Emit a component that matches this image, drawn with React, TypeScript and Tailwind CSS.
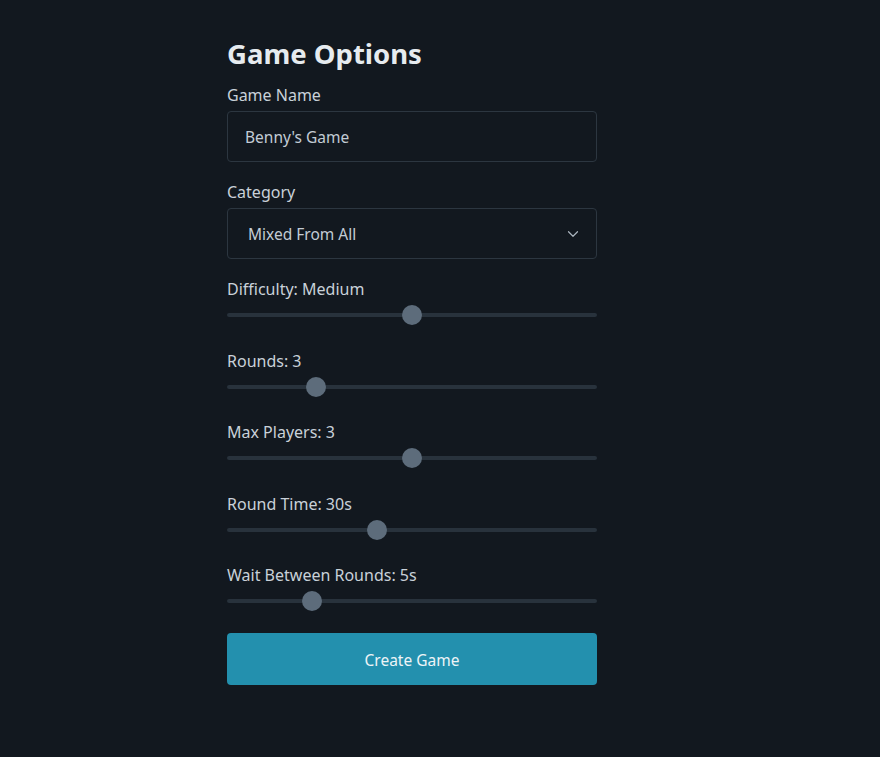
import { ChevronDown } from "lucide-react";

const sliders = [
  { label: "Difficulty: Medium", pos: 0.5 },
  { label: "Rounds: 3", pos: 0.24 },
  { label: "Max Players: 3", pos: 0.5 },
  { label: "Round Time: 30s", pos: 0.405 },
  { label: "Wait Between Rounds: 5s", pos: 0.23 },
];

function Slider({ pos }: { pos: number }) {
  return (
    <div className="relative h-5 w-full flex items-center">
      <div className="h-1 w-full rounded-full bg-[#28323c]" />
      <div
        className="absolute top-0 w-5 h-5 rounded-full bg-[#5d6c7b]"
        style={{ left: `calc(${pos * 100}% - 10px)` }}
      />
    </div>
  );
}

export default function App() {
  return (
    <div
      className="min-h-screen w-full bg-[#12181f] text-[#c9d1d9] pl-[227px]"
      style={{ fontFamily: '"Noto Sans", "Open Sans", sans-serif' }}
    >
      <div className="w-[370px] pt-[35px]">
        <h1 className="text-[27.5px] leading-[38px] font-bold text-[#e6ebef] mb-[10px]">
          Game Options
        </h1>

        <label className="block text-[16px] leading-6 mb-1">Game Name</label>
        <div className="h-[51px] w-full rounded-[4px] border border-[#2c3640] flex items-center pl-[17px] pt-[2px] text-[15.5px] text-[#c3ccd5]">
          Benny's Game
        </div>

        <label className="block text-[16px] leading-6 mt-[18px] mb-1">Category</label>
        <div className="h-[51px] w-full rounded-[4px] border border-[#2c3640] flex items-center justify-between pl-[20px] pr-[14px] text-[15.5px] text-[#c3ccd5]">
          <span className="pt-[2px]">Mixed From All</span>
          <ChevronDown className="w-[18px] h-[18px] text-[#aab4be]" strokeWidth={1.6} />
        </div>

        <div className="mt-[18px] flex flex-col gap-[23.5px]">
          {sliders.map((s) => (
            <div key={s.label}>
              <div className="text-[16px] leading-6 mb-1">{s.label}</div>
              <Slider pos={s.pos} />
            </div>
          ))}
        </div>

        <button className="mt-[22px] w-full h-[52px] rounded-[4px] bg-[#2390ae] pt-1 text-[15.5px] text-[#eef4f7]">
          Create Game
        </button>
      </div>
    </div>
  );
}
